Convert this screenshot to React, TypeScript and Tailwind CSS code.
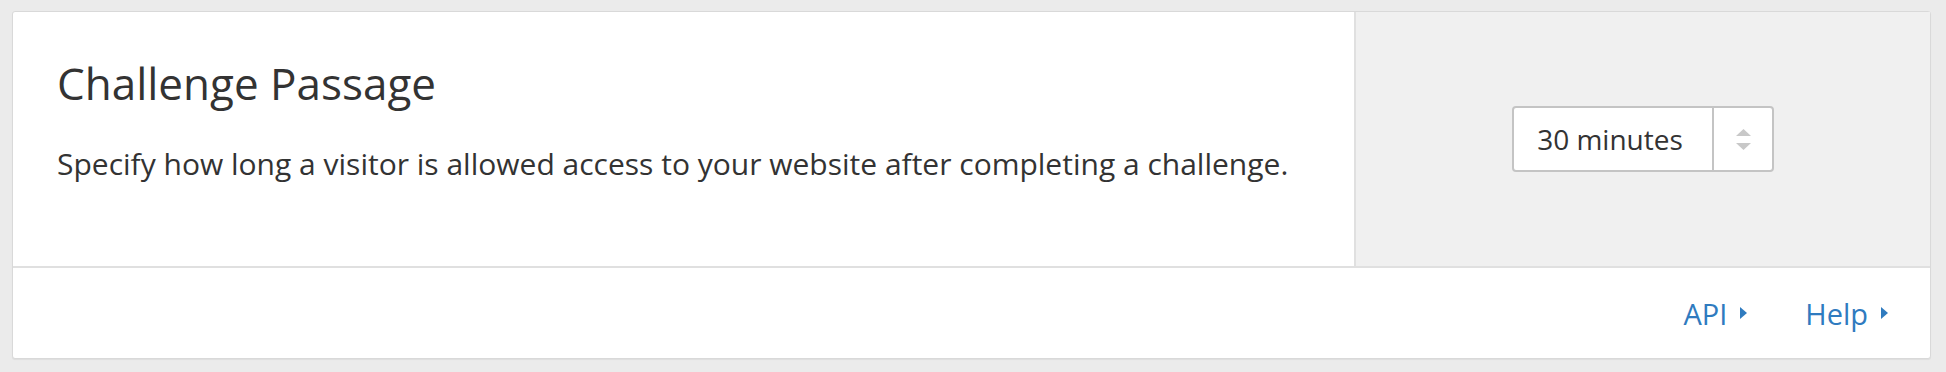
export default function App() {
  return (
    <div className="min-h-screen bg-[#ebebeb] pt-[11px] pl-[12px] pr-[15px] pb-[12px] font-['Open_Sans',sans-serif] text-[#333]">
      <div className="rounded-[3px] border border-[#d9d9d9] bg-white shadow-[0_1px_1px_rgba(0,0,0,0.06)]">
        <div className="flex h-[256px] border-b-2 border-[#e0e0e0]">
          <div className="flex-1 pl-[44px] pt-[49px]">
            <h2 className="text-[44px] leading-none font-normal">Challenge Passage</h2>
            <p className="mt-[44px] text-[30px] leading-none">
              Specify how long a visitor is allowed access to your website after completing a challenge.
            </p>
          </div>
          <div className="flex w-[576px] items-center justify-center border-l-2 border-[#e0e0e0] bg-[#f0f0f0]">
            <div className="flex h-[66px] w-[262px] rounded-[4px] border-2 border-[#c4c4c4] bg-white">
              <div className="flex flex-1 items-center justify-center pr-[6px] text-[28px] leading-none">30 minutes</div>
              <div className="flex w-[60px] flex-col items-center justify-center gap-[7px] border-l-2 border-[#c4c4c4]">
                <svg width="15" height="7" viewBox="0 0 15 7">
                  <path d="M7.5 0L15 7H0Z" fill="#c8c8c8" />
                </svg>
                <svg width="15" height="7" viewBox="0 0 15 7">
                  <path d="M0 0H15L7.5 7Z" fill="#c8c8c8" />
                </svg>
              </div>
            </div>
          </div>
        </div>
        <div className="flex h-[90px] items-center justify-end gap-[58px] pr-[42px] text-[29px] leading-none text-[#2f7bbf]">
          <a className="flex items-center gap-[13px]">
            API
            <svg width="7" height="12" viewBox="0 0 7 12">
              <path d="M0 0L7 6L0 12Z" fill="#2f7bbf" />
            </svg>
          </a>
          <a className="flex items-center gap-[13px]">
            Help
            <svg width="7" height="12" viewBox="0 0 7 12">
              <path d="M0 0L7 6L0 12Z" fill="#2f7bbf" />
            </svg>
          </a>
        </div>
      </div>
    </div>
  );
}
